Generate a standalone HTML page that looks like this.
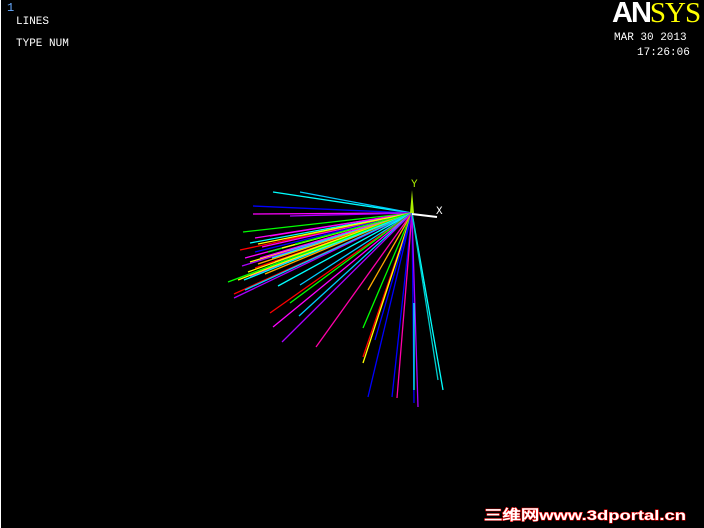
<!DOCTYPE html>
<html><head><style>
body{margin:0;width:704px;height:528px;background:#000;overflow:hidden;position:relative;font-family:"Liberation Mono",monospace;}
.t{position:absolute;color:#fff;font-size:11px;line-height:11px;white-space:pre}
</style></head><body>
<div style="position:absolute;left:0;top:0;width:1px;height:528px;background:#fff"></div>
<div class="t" style="left:7px;top:3px;color:#6af;font-size:12px">1</div>
<div class="t" style="left:16px;top:17px">LINES</div>
<div class="t" style="left:16px;top:39px">TYPE NUM</div>
<div class="t" style="left:614px;top:33px">MAR 30 2013</div>
<div class="t" style="left:637px;top:48px">17:26:06</div>
<div style="position:absolute;left:612px;top:0px;font:bold 29px 'Liberation Sans',sans-serif;letter-spacing:-2px;color:#fff;line-height:26px">AN<span style="color:#ff0;font-family:'Liberation Serif',serif;font-weight:normal;letter-spacing:-1px">SYS</span></div>
<svg width="704" height="528" style="position:absolute;left:0;top:0" stroke-width="1.3">
<g id="f">
<line x1="412" y1="213" x2="273" y2="192" stroke="#0ff"/>
<line x1="412" y1="213" x2="300" y2="192" stroke="#0cf"/>
<line x1="412" y1="213" x2="253" y2="206" stroke="#00f"/>
<line x1="412" y1="213" x2="253" y2="214" stroke="#f0f"/>
<line x1="412" y1="213" x2="290" y2="216" stroke="#a0f"/>
<line x1="412" y1="213" x2="243" y2="232" stroke="#0f0"/>
<line x1="412" y1="213" x2="255" y2="238" stroke="#f0f"/>
<line x1="412" y1="213" x2="250" y2="243" stroke="#0ff"/>
<line x1="412" y1="213" x2="240" y2="250" stroke="#f00"/>
<line x1="412" y1="213" x2="262" y2="247" stroke="#f0f"/>
<line x1="412" y1="213" x2="255" y2="252" stroke="#00f"/>
<line x1="412" y1="213" x2="245" y2="258" stroke="#f0f"/>
<line x1="412" y1="213" x2="250" y2="262" stroke="#ff0"/>
<line x1="412" y1="213" x2="242" y2="266" stroke="#a0f"/>
<line x1="412" y1="213" x2="255" y2="268" stroke="#f00"/>
<line x1="412" y1="213" x2="248" y2="272" stroke="#ff0"/>
<line x1="412" y1="213" x2="262" y2="270" stroke="#0f0"/>
<line x1="412" y1="213" x2="250" y2="276" stroke="#f0f"/>
<line x1="412" y1="213" x2="265" y2="274" stroke="#fa0"/>
<line x1="412" y1="213" x2="238" y2="280" stroke="#ff0"/>
<line x1="412" y1="213" x2="270" y2="266" stroke="#0fa"/>
<line x1="412" y1="213" x2="280" y2="256" stroke="#f0f"/>
<line x1="412" y1="213" x2="290" y2="250" stroke="#0ff"/>
<line x1="412" y1="213" x2="275" y2="262" stroke="#ff0"/>
<line x1="412" y1="213" x2="285" y2="240" stroke="#f00"/>
<line x1="412" y1="213" x2="300" y2="236" stroke="#0f0"/>
<line x1="412" y1="213" x2="270" y2="236" stroke="#f0f"/>
<line x1="412" y1="213" x2="258" y2="244" stroke="#ff0"/>
<line x1="412" y1="213" x2="268" y2="252" stroke="#0f0"/>
<line x1="412" y1="213" x2="260" y2="258" stroke="#f0f"/>
<line x1="412" y1="213" x2="272" y2="258" stroke="#0ff"/>
<line x1="412" y1="213" x2="258" y2="264" stroke="#fa0"/>
<line x1="412" y1="213" x2="282" y2="248" stroke="#ff0"/>
<line x1="412" y1="213" x2="295" y2="244" stroke="#0f0"/>
<line x1="412" y1="213" x2="228" y2="282" stroke="#0f0"/>
<line x1="412" y1="213" x2="244" y2="280" stroke="#0ff"/>
<line x1="412" y1="213" x2="234" y2="294" stroke="#f00"/>
<line x1="412" y1="213" x2="234" y2="298" stroke="#a0f"/>
<line x1="412" y1="213" x2="245" y2="290" stroke="#0cf"/>
<line x1="412" y1="213" x2="278" y2="286" stroke="#0ff"/>
<line x1="412" y1="213" x2="300" y2="285" stroke="#0cf"/>
<line x1="412" y1="213" x2="270" y2="313" stroke="#f00"/>
<line x1="412" y1="213" x2="290" y2="303" stroke="#0f0"/>
<line x1="412" y1="213" x2="273" y2="327" stroke="#f0f"/>
<line x1="412" y1="213" x2="299" y2="316" stroke="#0cf"/>
<line x1="412" y1="213" x2="282" y2="342" stroke="#a0f"/>
<line x1="412" y1="213" x2="316" y2="347" stroke="#f0a"/>
<line x1="412" y1="213" x2="368" y2="290" stroke="#fa0"/>
<line x1="412" y1="213" x2="363" y2="328" stroke="#0f0"/>
<line x1="412" y1="213" x2="363" y2="357" stroke="#f00"/>
<line x1="412" y1="213" x2="363" y2="363" stroke="#ff0"/>
<line x1="412" y1="213" x2="375" y2="340" stroke="#00f"/>
<line x1="412" y1="213" x2="368" y2="397" stroke="#00f"/>
<line x1="412" y1="213" x2="392" y2="397" stroke="#00f"/>
<line x1="412" y1="213" x2="397" y2="398" stroke="#f0a"/>
<line x1="412" y1="213" x2="414" y2="403" stroke="#00f"/>
<line x1="412" y1="213" x2="418" y2="407" stroke="#a0f"/>
<line x1="414" y1="303" x2="414" y2="390" stroke="#0ff"/>
<line x1="412" y1="213" x2="443" y2="390" stroke="#0ff"/>
<line x1="412" y1="213" x2="438" y2="380" stroke="#0cc"/>
</g>
<polygon points="410,213 414,213 412,190" fill="#ae0"/>
<line x1="412" y1="214" x2="437" y2="217" stroke="#fff" stroke-width="2"/>
<text x="411" y="187" fill="#ae0" font-family="Liberation Mono" font-size="11">Y</text>
<text x="436" y="214" fill="#fff" font-family="Liberation Mono" font-size="11">X</text>
<text x="484" y="520" fill="#fff" stroke="#f00" stroke-width="0.9" paint-order="stroke" font-family="Liberation Sans,WenQuanYi Zen Hei,sans-serif" font-size="14" font-weight="bold" textLength="202" lengthAdjust="spacingAndGlyphs">三维网www.3dportal.cn</text>
</svg>
</body></html>
